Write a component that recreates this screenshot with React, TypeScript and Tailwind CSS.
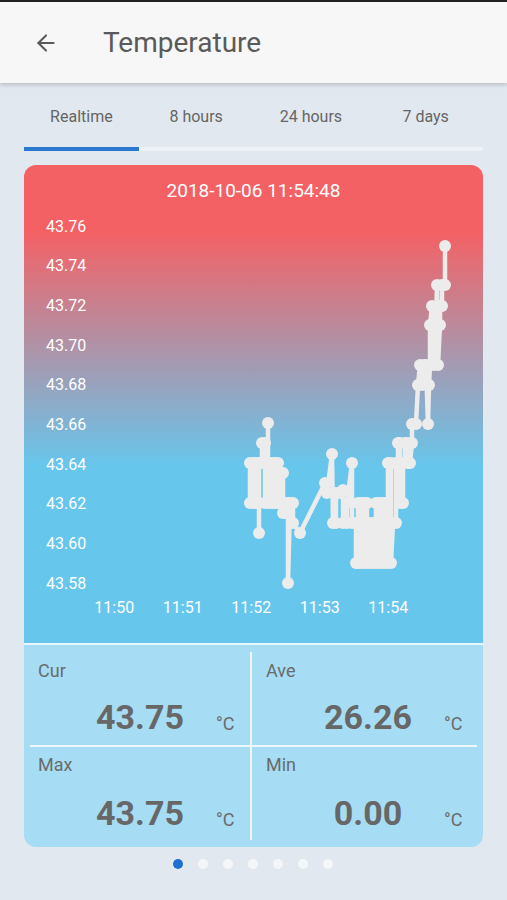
import { ArrowLeft } from "lucide-react";

const tabs = ["Realtime", "8 hours", "24 hours", "7 days"];
const yLabels = ["43.76", "43.74", "43.72", "43.70", "43.68", "43.66", "43.64", "43.62", "43.60", "43.58"];
const xLabels = ["11:50", "11:51", "11:52", "11:53", "11:54"];

// page coords of the readings, shifted into card space below
const raw: [number, number][] = [
  [250, 463], [250, 503], [253, 503], [253, 463], [256, 463], [256, 503], [259, 503], [259, 533],
  [259, 463], [262, 463], [262, 443], [265, 443], [265, 503], [268, 503], [268, 423], [268, 463],
  [272, 463], [272, 503], [275, 503], [275, 463], [278, 463], [278, 503], [281, 503], [281, 473],
  [283, 473], [283, 513], [285, 513], [285, 503], [288, 503], [288, 583], [290, 503], [293, 503],
  [293, 523], [300, 533], [325, 483], [327, 493], [332, 454], [333, 523], [336, 523], [336, 493],
  [340, 493], [343, 490], [343, 523], [347, 523], [347, 503], [352, 463], [352, 523], [356, 523],
  [356, 563], [358, 563], [358, 503], [361, 503], [361, 563], [364, 563], [364, 503], [367, 503],
  [367, 563], [370, 563], [370, 523], [373, 523], [373, 563], [376, 563], [376, 503], [379, 503],
  [379, 563], [382, 563], [382, 503], [385, 503], [385, 563], [388, 563], [388, 463], [391, 463],
  [391, 563], [393, 523], [396, 523], [396, 463], [398, 463], [398, 443], [400, 443], [400, 503],
  [403, 503], [403, 463], [405, 463], [405, 443], [408, 443], [408, 463], [410, 463], [412, 443],
  [412, 424], [416, 424], [418, 385], [420, 365], [422, 385], [424, 365], [426, 365], [428, 424],
  [429, 385], [430, 365], [430, 325], [432, 306], [434, 365], [436, 325], [437, 285], [438, 365],
  [440, 325], [440, 306], [442, 306], [442, 285], [445, 285], [445, 246],
];
const pts = raw.map(([x, y]) => [x - 24, y - 165] as [number, number]);

interface StatCellProps {
  label: string;
  value: string;
  className: string;
  gap: string;
}

function StatCell({ label, value, className, gap }: StatCellProps) {
  return (
    <div className={`flex flex-col pl-[14px] ${className}`}>
      <span className="text-[18px] leading-[22px] text-[#6b6b6b]">{label}</span>
      <div className={`flex items-baseline ${gap}`}>
        <span className="ml-[27px] w-[150px] text-center text-[34px] leading-[40px] font-bold text-[#676767]">
          {value}
        </span>
        <span className="ml-[1px] text-[18px] text-[#6b6b6b] translate-y-[1px]">°C</span>
      </div>
    </div>
  );
}

export default function App() {
  return (
    <div className="w-[507px] h-[900px] bg-[#e2e8ef] flex flex-col font-['Roboto',sans-serif] overflow-hidden">
      <div className="h-[2px] bg-[#222]" />
      <header className="h-[81px] bg-[#f7f7f7] flex items-center shadow-[0_2px_4px_rgba(0,0,0,0.18)] z-10">
        <ArrowLeft size={26} strokeWidth={1.9} className="ml-[33px] text-[#5a5a5a]" />
        <h1 className="ml-[44px] text-[28px] text-[#5a5a5a]">Temperature</h1>
      </header>

      <div className="mx-[24px] mt-[23px] flex flex-col">
        <div className="flex">
          {tabs.map((t) => (
            <div key={t} className="flex-1 text-center text-[16px] leading-[22px] text-[#666]">{t}</div>
          ))}
        </div>
        <div className="mt-[19px] h-[4px] bg-[#eef2f6] flex">
          <div className="w-[115px] bg-[#2a78cf]" />
        </div>
      </div>

      <div className="mx-[24px] mt-[14px] rounded-[12px] overflow-hidden flex flex-col">
        <div className="relative h-[478px] bg-[linear-gradient(180deg,#f46165_14%,#67c6ec_63%)] flex flex-col pt-[13px]">
          <div className="text-center text-[19px] leading-[26px] text-white">2018-10-06 11:54:48</div>
          <div className="mt-[3px] pl-[22px] flex flex-col">
            {yLabels.map((l) => (
              <div key={l} className="h-[39.67px] flex items-center text-[16px] text-white">{l}</div>
            ))}
          </div>
          <div className="-mt-[4px] flex">
            {xLabels.map((l, i) => (
              <div
                key={l}
                className={`w-[68.5px] text-center text-[16px] leading-[16px] text-white ${i === 0 ? "ml-[56px]" : ""}`}
              >
                {l}
              </div>
            ))}
          </div>
          <svg className="absolute inset-0" width="460" height="478" viewBox="0 0 460 478">
            <polyline
              points={pts.map((p) => p.join(",")).join(" ")}
              fill="none"
              stroke="#ececec"
              strokeWidth="4.5"
              strokeLinejoin="round"
            />
            {pts.map(([x, y], i) => (
              <circle key={i} cx={x} cy={y} r="6" fill="#ececec" />
            ))}
          </svg>
        </div>
        <div className="h-[2px] bg-[#eaf6fc]" />
        <div className="bg-[#a6ddf4] grid grid-cols-[226px_1fr]">
          <StatCell label="Cur" value="43.75" className="h-[100px] pt-[15px]" gap="mt-[15px]" />
          <div className="border-l-2 border-[#eef8fc] mt-[7px]">
            <StatCell label="Ave" value="26.26" className="h-[93px] pt-[8px]" gap="mt-[15px]" />
          </div>
          <div className="col-span-2 mx-[6px] h-[2px] bg-[#eef8fc]" />
          <StatCell label="Max" value="43.75" className="h-[100px] pt-[7px]" gap="mt-[17px]" />
          <div className="border-l-2 border-[#eef8fc] mb-[7px]">
            <StatCell label="Min" value="0.00" className="h-[93px] pt-[7px]" gap="mt-[17px]" />
          </div>
        </div>
      </div>

      <div className="mt-[12px] flex justify-center gap-[15px] pr-[1px]">
        {[0, 1, 2, 3, 4, 5, 6].map((i) => (
          <div key={i} className={`w-[10px] h-[10px] rounded-full ${i === 0 ? "bg-[#1f6fd0]" : "bg-[#f4f7fa]"}`} />
        ))}
      </div>
    </div>
  );
}
